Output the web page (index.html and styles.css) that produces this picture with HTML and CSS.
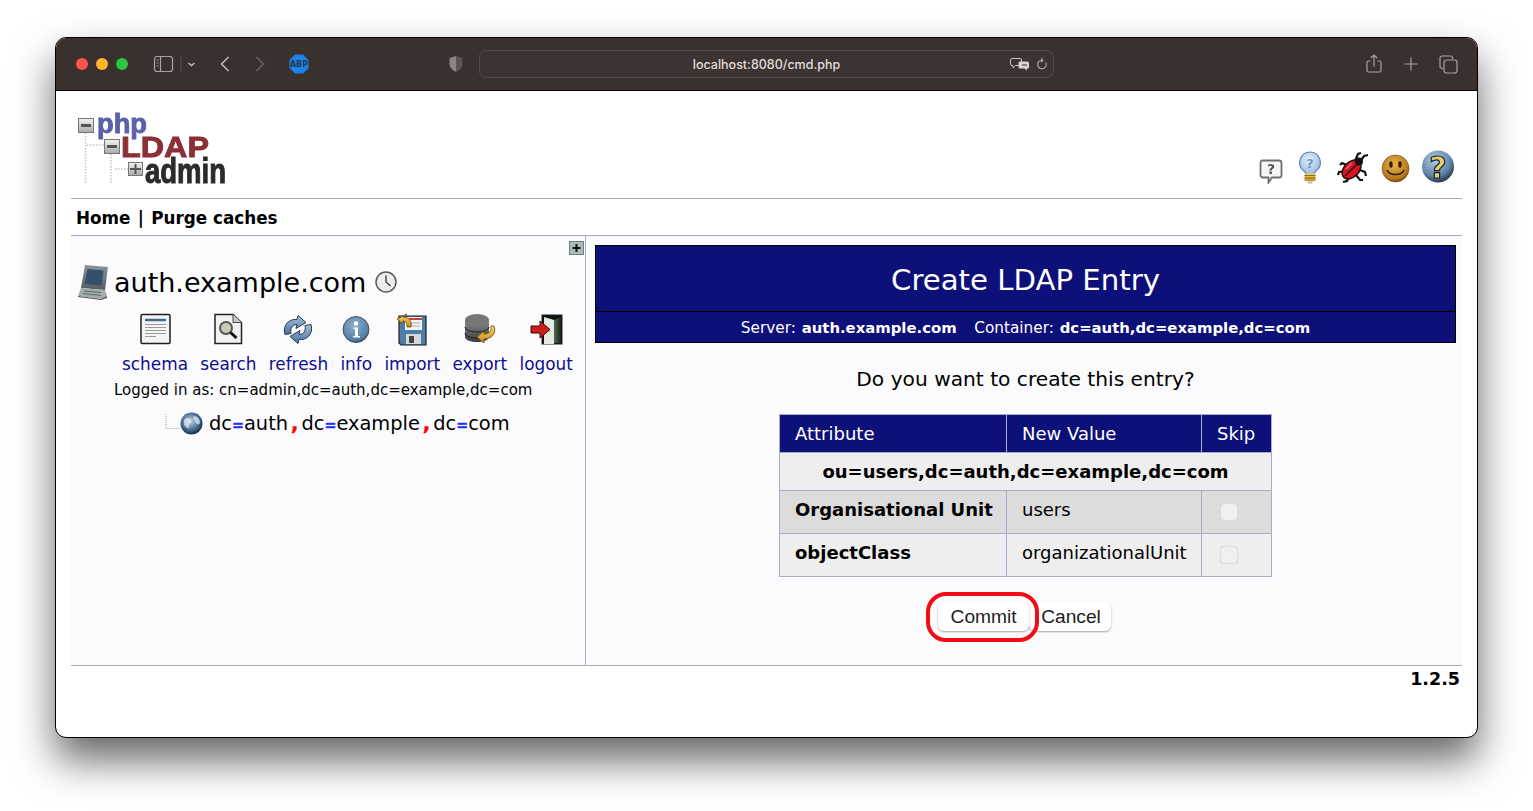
FILE: index.html
```html
<!DOCTYPE html>
<html lang="en">
<head>
<meta charset="utf-8">
<title>phpLDAPadmin</title>
<link rel="stylesheet" href="styles.css">
</head>
<body>
<svg class="defs" width="0" height="0" aria-hidden="true">
  <defs>
    <linearGradient id="gGrey" x1="0" y1="0" x2="0" y2="1"><stop offset="0" stop-color="#f4f4f4"/><stop offset="1" stop-color="#a8a8a8"/></linearGradient>
    <linearGradient id="gDisk" x1="0" y1="0" x2="0" y2="1"><stop offset="0" stop-color="#8a8a8a"/><stop offset="1" stop-color="#3c3c3c"/></linearGradient>
    <linearGradient id="gGold" x1="0" y1="0" x2="0" y2="1"><stop offset="0" stop-color="#f6d56e"/><stop offset="1" stop-color="#c88a16"/></linearGradient>
    <linearGradient id="gArrow" x1="0" y1="0" x2="0" y2="1"><stop offset="0" stop-color="#a9c3dc"/><stop offset="1" stop-color="#44709c"/></linearGradient>
    <radialGradient id="gSmile" cx=".45" cy=".35" r=".7"><stop offset="0" stop-color="#e9b04a"/><stop offset=".75" stop-color="#b87a1c"/><stop offset="1" stop-color="#5c3c10"/></radialGradient>
    <radialGradient id="gHelp" cx=".4" cy=".3" r=".75"><stop offset="0" stop-color="#b5cde0"/><stop offset=".65" stop-color="#5f86aa"/><stop offset="1" stop-color="#1c2c3e"/></radialGradient>
    <radialGradient id="gGlobe" cx=".45" cy=".4" r=".65"><stop offset="0" stop-color="#c8d6e6"/><stop offset=".55" stop-color="#4f769e"/><stop offset="1" stop-color="#0e1c30"/></radialGradient>
    <radialGradient id="gInfo" cx=".45" cy=".35" r=".7"><stop offset="0" stop-color="#8fb0cf"/><stop offset=".8" stop-color="#527da6"/><stop offset="1" stop-color="#26405c"/></radialGradient>
    <radialGradient id="gBulb" cx=".45" cy=".35" r=".7"><stop offset="0" stop-color="#e8f2fd"/><stop offset="1" stop-color="#8db3e0"/></radialGradient>
    <linearGradient id="gDoor" x1="0" y1="0" x2="1" y2="0"><stop offset="0" stop-color="#4f6a4a"/><stop offset="1" stop-color="#1a211a"/></linearGradient>
    <linearGradient id="gServer" x1="0" y1="0" x2="0" y2="1"><stop offset="0" stop-color="#8c9498"/><stop offset="1" stop-color="#565c60"/></linearGradient>
  </defs>
</svg>

<div class="window">
  <header class="titlebar">
    <span class="dot dot-red"></span>
    <span class="dot dot-yellow"></span>
    <span class="dot dot-green"></span>
    <svg class="tb-sidebar" width="46" height="18" viewBox="0 0 46 18" fill="none" stroke="#a9a3a1">
      <rect x="1.5" y="1.5" width="18" height="15" rx="2.5" stroke-width="1.2"/>
      <path d="M7.5 2v14" stroke-width="1.2"/>
      <path d="M3.5 5h2M3.5 8h2M3.5 11h2" stroke-width="1"/>
      <path d="M28 1v16" stroke="#5a5250"/>
      <path d="M35.5 8l3 2.5 3-2.5" stroke="#c6c1bf" stroke-width="1.4"/>
    </svg>
    <svg class="tb-back" width="12" height="16" viewBox="0 0 12 16" fill="none" stroke="#c2bdbb" stroke-width="1.5"><path d="M9.5 1L2.5 8l7 7"/></svg>
    <svg class="tb-forward" width="12" height="16" viewBox="0 0 12 16" fill="none" stroke="#6a6260" stroke-width="1.5"><path d="M2.5 1l7 7-7 7"/></svg>
    <svg class="tb-abp" width="20" height="20" viewBox="0 0 20 20"><path d="M6 0.5h8L19.500 6v8L14 19.500H6L0.500 14V6z" fill="#1c83e6"/><text x="10" y="13" text-anchor="middle" class="abp-text">ABP</text></svg>
    <svg class="tb-shield" width="16" height="18" viewBox="0 0 16 18"><path d="M8 1l6.500 2v6c0 3.500-3 6.500-6.500 8z" fill="#5d5553"/><path d="M8 1L1.500 3v6c0 3.500 3 6.500 6.500 8z" fill="#8a8381"/></svg>
    <div class="urlbar">
      <span class="url">localhost:8080/cmd.php</span>
      <span class="url-tools">
        <svg width="20" height="14" viewBox="0 0 20 14"><path d="M2 1.500h8a1.500 1.500 0 0 1 1.500 1.500v4a1.500 1.500 0 0 1-1.500 1.500H5.500L3 11V8.500H2A1.500 1.500 0 0 1 .5 7V3A1.500 1.500 0 0 1 2 1.500z" fill="none" stroke="#c6c1bf"/><path d="M10 4.500h7.500A1.500 1.500 0 0 1 19 6v4a1.500 1.500 0 0 1-1.500 1.500H17V13.500l-2.500-2H10A1.500 1.500 0 0 1 8.500 10V6A1.500 1.500 0 0 1 10 4.500z" fill="#d8d4d2"/><path d="M12 8h5" stroke="#3a302e"/></svg>
        <svg width="12" height="14" viewBox="0 0 12 14" fill="none" stroke="#b5b0ae" stroke-width="1.1"><path d="M9.800 5.500A4.300 4.300 0 1 1 6 3.200"/><path d="M5 1l2 2.200L5 5"/></svg>
      </span>
    </div>
    <svg class="tb-share" width="16" height="20" viewBox="0 0 16 20" fill="none" stroke="#a9a3a1" stroke-width="1.2"><path d="M4.500 7H2.500A1.500 1.500 0 0 0 1 8.500v8A1.500 1.500 0 0 0 2.500 18h11a1.500 1.500 0 0 0 1.500-1.500v-8A1.500 1.500 0 0 0 13.500 7h-2"/><path d="M8 12.500V1M4.800 4L8 1l3.200 3"/></svg>
    <svg class="tb-plus" width="16" height="16" viewBox="0 0 16 16" fill="none" stroke="#a9a3a1" stroke-width="1.2"><path d="M8 1.500v13M1.500 8h13"/></svg>
    <svg class="tb-tabs" width="19" height="19" viewBox="0 0 19 19" fill="none" stroke="#a9a3a1" stroke-width="1.2"><path d="M4 13.500H3A2 2 0 0 1 1 11.500V3a2 2 0 0 1 2-2h8.500a2 2 0 0 1 2 2v1"/><rect x="5" y="5" width="13" height="13" rx="2.500"/></svg>
  </header>

  <main class="page">
    <div class="head">
      <svg class="logo" width="152" height="78" viewBox="0 0 152 78" role="img" aria-label="phpLDAPadmin">
        <path d="M7.500 24v50M9 36h17M33 45v29M37 60h13" stroke="#c4c4c4" stroke-width="1.500" stroke-dasharray="1.500 1.500" fill="none"/>
        <rect x="0.500" y="9.500" width="15" height="14" fill="url(#gGrey)" stroke="#777"/>
        <rect x="3" y="15" width="10" height="3" fill="#555"/>
        <rect x="26.500" y="30.500" width="15" height="14" fill="url(#gGrey)" stroke="#777"/>
        <rect x="29" y="36" width="10" height="3" fill="#555"/>
        <rect x="50.500" y="53.500" width="14" height="13" fill="url(#gGrey)" stroke="#777"/>
        <path d="M57.500 55v10M52 60h11" stroke="#555" stroke-width="2"/>
        <text x="19" y="24" class="logo-php" textLength="50" lengthAdjust="spacingAndGlyphs">php</text>
        <text x="43" y="48" class="logo-ldap" textLength="88" lengthAdjust="spacingAndGlyphs">LDAP</text>
        <text x="67" y="74" class="logo-admin" textLength="81" lengthAdjust="spacingAndGlyphs">admin</text>
      </svg>
      <div class="head-icons">
        <svg class="hi-help" width="24" height="26" viewBox="0 0 24 26"><path d="M4 2.500h16A2.500 2.500 0 0 1 22.500 5v12a2.500 2.500 0 0 1-2.500 2.500h-7l-3.500 5v-5H4A2.500 2.500 0 0 1 1.500 17V5A2.500 2.500 0 0 1 4 2.500z" fill="#f6f6f6" stroke="#6e6e6e" stroke-width="1.800"/><text x="12" y="16" class="ico-q-grey">?</text></svg>
        <svg class="hi-bulb" width="24" height="33" viewBox="0 0 24 33"><path d="M12 1a10.500 10.500 0 0 0-6 19c1.500 1.200 2 2.500 2 3.500h8c0-1 .5-2.300 2-3.500A10.500 10.500 0 0 0 12 1z" fill="url(#gBulb)" stroke="#6486b4" stroke-width="1.200"/><rect x="6.500" y="22.500" width="11" height="7.500" rx="1" fill="url(#gGold)"/><path d="M6.500 24.500h11M6.500 27h11" stroke="#8e6a18"/><path d="M9 30.500h6l-1 2h-4z" fill="#b8b8a8"/><text x="12" y="17" class="ico-q-bulb">?</text></svg>
        <svg class="hi-bug" width="33" height="33" viewBox="0 0 33 33" fill="none" stroke="#111" stroke-width="2.200"><path d="M19 10L22 3l3-1M23 12l5-7 4-1M13 15L6 12 4 14M11 20l-8 1-1 3M14 24l-3 6-4 1M20 24l4 5 3 0M24 19l5 2 1 4"/><ellipse cx="15.500" cy="18.500" rx="7.500" ry="11" transform="rotate(45 15.500 18.500)" fill="#d01622" stroke="#2a0808" stroke-width="1.500"/><circle cx="23" cy="10.500" r="4" fill="#111" stroke="none"/><path d="M9 25l13-13" stroke="#3a0a0e" stroke-width="1.500"/><path d="M10 18l6-6" stroke="#f0656c" stroke-width="1.500"/></svg>
        <svg class="hi-smile" width="29" height="30" viewBox="0 0 29 30"><circle cx="14.500" cy="14.500" r="13.500" fill="url(#gSmile)" stroke="#6c4510" stroke-width=".6"/><ellipse cx="10" cy="10.500" rx="1.700" ry="3.200" fill="#2e1c06"/><ellipse cx="19" cy="10.500" rx="1.700" ry="3.200" fill="#2e1c06"/><path d="M6 16c2 6 15 6 17 0" fill="none" stroke="#2e1c06" stroke-width="1.500"/></svg>
        <svg width="34" height="35" viewBox="0 0 34 35"><circle cx="17" cy="17.500" r="16" fill="url(#gHelp)"/><text x="17" y="29" class="ico-q-help">?</text></svg>
      </div>
    </div>

    <nav class="menu"><a>Home</a> | <a>Purge caches</a></nav>

    <div class="panels">
      <aside class="tree">
        <div class="tree-top">
          <svg width="15" height="14" viewBox="0 0 15 14"><rect x=".5" y=".5" width="14" height="13" fill="#a9bcbc" stroke="#6f8080"/><path d="M7.500 3v8M3.500 7h8" stroke="#111" stroke-width="2"/></svg>
        </div>
        <div class="server">
          <svg class="server-ico" width="32" height="36" viewBox="0 0 32 36"><path d="M8 1l23 2-3 23-24-2z" fill="url(#gServer)"/><path d="M10.500 5l16 1.500-2 15L7.500 20z" fill="#34506a"/><path d="M4 24l24 2 2 6-6 3-23-3z" fill="#a5acaf"/><path d="M1 32l23 3 6-3v2l-6 2-23-3z" fill="#4e5458"/><path d="M7 27l17 1.500M6 29.500l18 2" stroke="#60666a"/></svg>
          <span class="server-name">auth.example.com</span>
          <svg class="server-clock" width="22" height="22" viewBox="0 0 22 22"><circle cx="11" cy="11" r="10" fill="#ececec" stroke="#5a5a5a" stroke-width="1.500"/><path d="M11 4.500V11l4.500 4" fill="none" stroke="#333" stroke-width="1.300"/></svg>
        </div>
        <div class="actions">
          <a class="action">
            <svg width="33" height="33" viewBox="0 0 33 33"><rect x="2" y="1.500" width="29" height="29" rx="1.500" fill="#f4f4f4" stroke="#1e1e1e" stroke-width="1.500"/><path d="M6 7h21" stroke="#44688c" stroke-width="2.500"/><path d="M6 11.500h21M6 14.500h21M6 17.500h21M6 20.500h21M6 23.500h11" stroke="#9a9a9a"/></svg>
            <span>schema</span>
          </a>
          <a class="action">
            <svg width="30" height="33" viewBox="0 0 30 33"><path d="M2 1.500h18l8.500 8v21H2z" fill="#f2f2f2" stroke="#222" stroke-width="1.500"/><path d="M20 1.500v8h8.500" fill="#ccc" stroke="#444"/><circle cx="13" cy="15" r="6" fill="#c8ccb4" stroke="#555" stroke-width="2"/><path d="M17.500 19.500l6 5.500" stroke="#111" stroke-width="3"/></svg>
            <span>search</span>
          </a>
          <a class="action">
            <svg width="32" height="30" viewBox="0 0 32 30" fill="url(#gArrow)" stroke="#22384e" stroke-width="1"><path d="M3 20C0 10 8 4 15 5l1-4 8 7-10 6 1-4c-5 0-7 4-6 9z"/><path d="M29 10c3 10-5 16-12 15l-1 4-8-7 10-6-1 4c5 0 7-4 6-9z"/></svg>
            <span>refresh</span>
          </a>
          <a class="action">
            <svg width="28" height="28" viewBox="0 0 28 28"><circle cx="14" cy="14" r="13" fill="url(#gInfo)" stroke="#3a3a3a" stroke-width=".8"/><circle cx="14" cy="8" r="2.200" fill="#fff"/><path d="M11.500 12h4.500v8.500h2v1.500h-7v-1.500h2V13.500h-1.500z" fill="#fff"/></svg>
            <span>info</span>
          </a>
          <a class="action">
            <svg width="34" height="33" viewBox="0 0 34 33"><path d="M4 3h27v29H6l-2-2z" fill="#4d7ea8" stroke="#1f1f1f" stroke-width="1.200"/><rect x="10" y="4" width="17" height="13" fill="#f3f3f3"/><path d="M10 6h17" stroke="#c84040" stroke-width="2"/><path d="M12 10h13M12 13h13" stroke="#aaa"/><rect x="11" y="21" width="15" height="10" fill="#d8d8d8"/><rect x="14" y="23" width="5" height="7" fill="#444"/><path d="M12 1L2 6l6 5V8c3 0 4 2 4 6h4c1-6-2-10-8-10z" fill="url(#gGold)" stroke="#6d4c08" stroke-width=".8"/></svg>
            <span>import</span>
          </a>
          <a class="action">
            <svg width="34" height="33" viewBox="0 0 34 33"><path d="M2 7v17c0 3 6 5 12 5s12-2 12-5V7z" fill="url(#gDisk)"/><ellipse cx="14" cy="7" rx="12" ry="6" fill="#777"/><path d="M2 14c0 3 6 5 12 5s12-2 12-5M2 20c0 3 6 5 12 5s12-2 12-5" fill="none" stroke="#1f1f1f"/><path d="M31 13c3 8-3 13-10 13v4l-7-6 7-6v3c5 0 8-3 7-8z" fill="url(#gGold)" stroke="#6d4c08" stroke-width=".8"/></svg>
            <span>export</span>
          </a>
          <a class="action">
            <svg width="33" height="31" viewBox="0 0 33 31"><rect x="12" y="1" width="20" height="29" fill="#0e1110" stroke="#222"/><path d="M14 3l10 3v24H14z" fill="#e4eadf"/><path d="M24 6l7-3v26h-7z" fill="url(#gDoor)"/><path d="M1 12h9V7l10 8.500L10 24v-5H1z" fill="#cf1c1c" stroke="#3a0808"/></svg>
            <span>logout</span>
          </a>
        </div>
        <div class="logged">Logged in as: cn=admin,dc=auth,dc=example,dc=com</div>
        <div class="dn-row">
          <svg class="dn-branch" width="15" height="20" viewBox="0 0 15 20"><path d="M1 0v14.500h14" fill="none" stroke="#a5a5a5" stroke-dasharray="1 1"/></svg>
          <svg class="dn-globe" width="23" height="23" viewBox="0 0 23 23"><circle cx="11.500" cy="11.500" r="11" fill="url(#gGlobe)"/><path d="M4 8c3-3 6-2 7 0s-3 4-2 7-3 0-5-2zM14 4c3 0 6 3 6 6s-3 3-4 1-4-5-2-7z" fill="#e8edf2" opacity=".7"/></svg>
          <span class="dn">dc<b class="eq">=</b>auth<b class="comma">,</b>dc<b class="eq">=</b>example<b class="comma">,</b>dc<b class="eq">=</b>com</span>
        </div>
      </aside>

      <section class="content">
        <div class="banner">
          <h1>Create LDAP Entry</h1>
          <p>Server: <b>auth.example.com</b> &nbsp; Container: <b>dc=auth,dc=example,dc=com</b></p>
        </div>
        <p class="question">Do you want to create this entry?</p>
        <table class="confirm">
          <colgroup><col class="c1"><col class="c2"><col class="c3"></colgroup>
          <thead>
            <tr><th>Attribute</th><th>New Value</th><th>Skip</th></tr>
          </thead>
          <tbody>
            <tr class="row-dn"><td colspan="3">ou=users,dc=auth,dc=example,dc=com</td></tr>
            <tr class="row-a"><td class="attr">Organisational Unit</td><td>users</td><td class="skip"><input type="checkbox" disabled></td></tr>
            <tr class="row-b"><td class="attr">objectClass</td><td>organizationalUnit</td><td class="skip"><input type="checkbox" disabled></td></tr>
          </tbody>
        </table>
        <div class="buttons">
          <button class="btn btn-commit" type="button">Commit</button>
          <button class="btn btn-cancel" type="button">Cancel</button>
        </div>
      </section>
    </div>

    <footer class="version">1.2.5</footer>
  </main>
</div>
</body>
</html>
```

FILE: styles.css
```css
* { box-sizing: border-box; }
html, body { margin: 0; height: 100%; }
body { background: #fff; padding: 37px 55px 0; font-family: "DejaVu Sans", sans-serif; overflow: hidden; color: #000; }
.defs { position: absolute; }

.window { width: 1423px; height: 701px; border: 1px solid #000; border-radius: 11px; background: #fff; overflow: hidden; }
.window { box-shadow: 0 22px 40px rgba(0,0,0,.6); }

.titlebar { height: 53px; background: #3a302e; border-bottom: 1px solid #000; display: flex; align-items: center; padding-left: 20px; }
.dot { width: 12px; height: 12px; border-radius: 50%; margin-right: 8px; }
.dot-red { background: #ff5450; }
.dot-yellow { background: #ffb429; }
.dot-green { background: #28c840; }
.tb-sidebar { margin-left: 17px; }
.tb-back { margin-left: 20px; }
.tb-forward { margin-left: 23px; }
.tb-abp { margin-left: 23px; }
.abp-text { font: bold 8px "DejaVu Sans", sans-serif; fill: #243a52; }
.tb-shield { margin-left: 139px; }
.urlbar { margin-left: 15px; width: 575px; height: 28px; border: 1px solid #554c4a; border-radius: 7px; display: flex; align-items: center; position: relative; background: #3d3331; }
.url { flex: 1; text-align: center; font: 500 12.500px "Inter", sans-serif; color: #e2dfdd; }
.url-tools { position: absolute; right: 5px; top: 6px; display: flex; align-items: center; gap: 6px; }
.tb-share { margin-left: 312px; }
.tb-plus { margin-left: 21px; }
.tb-tabs { margin-left: 20px; }

.page { padding: 0 15px; }
.head { height: 108px; border-bottom: 1px solid #aaaacc; display: flex; justify-content: space-between; align-items: flex-start; padding-left: 7px; }
.logo { margin-top: 18px; filter: blur(.4px); overflow: visible; }
.logo-php { font: bold 28px "Liberation Sans", sans-serif; fill: #5a60aa; stroke: #5a60aa; stroke-width: .9px; }
.logo-ldap { font: bold 30px "Liberation Sans", sans-serif; fill: #8c2f37; stroke: #8c2f37; stroke-width: .9px; }
.logo-admin { font: bold 35px "Liberation Sans", sans-serif; fill: #2b2b2b; stroke: #2b2b2b; stroke-width: 1px; }
.head-icons { display: flex; align-items: flex-end; padding-top: 58px; padding-right: 7px; height: 93px; filter: blur(.3px); }
.hi-help { margin-right: 15px; }
.hi-bulb { margin-right: 14px; }
.hi-bug { margin-right: 12px; }
.hi-smile { margin-right: 11px; }
.ico-q-grey { font: bold 14px "DejaVu Sans", sans-serif; fill: #555; text-anchor: middle; }
.ico-q-bulb { font: bold 13px "DejaVu Sans", sans-serif; fill: #6f93c0; text-anchor: middle; }
.ico-q-help { font: bold 30px "DejaVu Sans", sans-serif; fill: #e6cc70; stroke: #1a2430; stroke-width: 1.2px; text-anchor: middle; }

.menu { height: 37px; border-bottom: 1px solid #aaaacc; display: flex; align-items: center; padding: 2px 0 0 5px; gap: 1.500px; font-weight: bold; font-size: 16.800px; white-space: pre; }

.panels { display: flex; height: 429px; }
.tree { width: 515px; background: #fbfbfe; border-right: 1px solid #aaaacc; }
.tree-top { display: flex; justify-content: flex-end; padding: 5px 1px 0 0; height: 19px; }
.tree-top svg { display: block; }
.server { display: flex; align-items: center; margin-top: 9px; padding-left: 6px; height: 36px; }
.server-name { font-size: 27px; margin-left: 5px; }
.server-clock { margin-left: 9px; }
.actions { display: flex; gap: 12.300px; padding-left: 51px; margin-top: 13px; }
.action { display: flex; flex-direction: column; align-items: center; color: #0d0d8f; font-size: 16.900px; gap: 8px; }
.action svg { height: 33px; filter: blur(.3px); }
.logged { font-size: 15px; margin: 7px 0 0 43px; }
.dn-row { display: flex; align-items: center; margin: 13px 0 0 94px; }
.dn { font-size: 19.400px; margin-left: 6px; }
.eq { color: #2030ff; font-size: 14.300px; -webkit-text-stroke: .4px #2030ff; }
.comma { color: #ff0000; margin: 0 3px; -webkit-text-stroke: .4px #ff0000; }

.content { flex: 1; padding: 9px 6px 0 9px; background: #fbfbfe; }
.banner { background: #0d1078; border: 1px solid #000; color: #fff; text-align: center; }
.banner h1 { margin: 0; height: 66px; padding-top: 2px; line-height: 65px; font-size: 29.200px; font-weight: normal; border-bottom: 1px solid #000; }
.banner p { margin: 0; height: 30px; line-height: 33px; font-size: 15.300px; word-spacing: 1px; }
.banner b { font-size: 14.850px; }
.question { margin: 24px 0 0; text-align: center; font-size: 20.200px; line-height: 24px; }
.confirm { margin: 23px 0 0 184px; border-collapse: collapse; width: 492px; table-layout: fixed; font-size: 18px; }
.c1 { width: 227px; }
.c2 { width: 195px; }
.c3 { width: 70px; }
.confirm th, .confirm td { border: 1px solid #aaaacc; padding: 0 15px; text-align: left; white-space: nowrap; }
.confirm th { background: #0d1078; color: #fff; font-weight: normal; height: 38px; }
.row-dn td { background: #eeeeee; font-weight: bold; text-align: center; height: 38px; }
.row-a td { background: #dcdcdc; height: 43px; padding-bottom: 5px; }
.row-b td { background: #eeeeee; height: 43px; padding-bottom: 5px; }
.confirm .skip { padding-bottom: 0; }
.attr { font-weight: bold; }
.skip input { display: block; width: 18px; height: 18px; margin: 0 0 0 3px; appearance: none; background: #efefef; border: 1px solid #e0e0e0; border-radius: 4px; box-shadow: 0 0 1px rgba(0,0,0,.15); }
.buttons { display: flex; justify-content: center; margin-top: 25px; padding-right: 2px; position: relative; }
.btn { height: 29px; border: 0; border-radius: 6px; background: #fff; box-shadow: 0 1px 2px rgba(0,0,0,.35); font: 19.200px "Liberation Sans", sans-serif; color: #1e1e1e; padding: 0 10px; }
.btn-cancel { padding-left: 12px; }
.btn-commit { position: relative; width: 91px; }
.btn-commit::after { content: ""; position: absolute; left: -12px; top: -10px; right: -10px; bottom: -11px; border: 4px solid #f00e16; border-radius: 20px; }

.version { border-top: 1px solid #aaaacc; text-align: right; font-weight: bold; font-size: 17.500px; padding: 3px 2px 0 0; }
```
